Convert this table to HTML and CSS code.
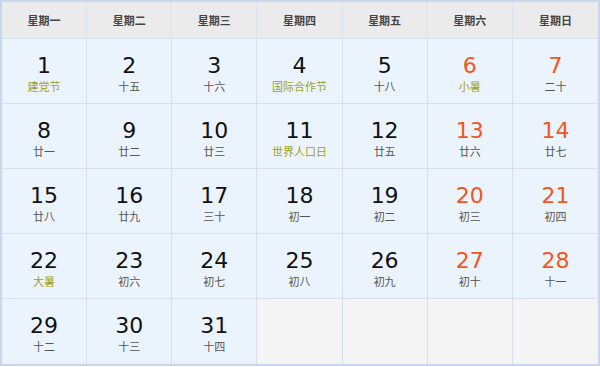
FILE: index.html
```html
<!DOCTYPE html>
<html lang="zh-CN">
<head>
<meta charset="utf-8">
<title>日历</title>
<link rel="stylesheet" href="styles.css">
</head>
<body>
<div class="cal">
  <div class="hd">星期一</div>
  <div class="hd">星期二</div>
  <div class="hd">星期三</div>
  <div class="hd">星期四</div>
  <div class="hd">星期五</div>
  <div class="hd">星期六</div>
  <div class="hd">星期日</div>

  <div class="day"><span class="n">1</span><span class="l fest">建党节</span></div>
  <div class="day"><span class="n">2</span><span class="l">十五</span></div>
  <div class="day"><span class="n">3</span><span class="l">十六</span></div>
  <div class="day"><span class="n">4</span><span class="l fest">国际合作节</span></div>
  <div class="day"><span class="n">5</span><span class="l">十八</span></div>
  <div class="day"><span class="n we">6</span><span class="l fest">小暑</span></div>
  <div class="day"><span class="n we">7</span><span class="l">二十</span></div>

  <div class="day"><span class="n">8</span><span class="l">廿一</span></div>
  <div class="day"><span class="n">9</span><span class="l">廿二</span></div>
  <div class="day"><span class="n">10</span><span class="l">廿三</span></div>
  <div class="day"><span class="n">11</span><span class="l fest">世界人口日</span></div>
  <div class="day"><span class="n">12</span><span class="l">廿五</span></div>
  <div class="day"><span class="n we">13</span><span class="l">廿六</span></div>
  <div class="day"><span class="n we">14</span><span class="l">廿七</span></div>

  <div class="day"><span class="n">15</span><span class="l">廿八</span></div>
  <div class="day"><span class="n">16</span><span class="l">廿九</span></div>
  <div class="day"><span class="n">17</span><span class="l">三十</span></div>
  <div class="day"><span class="n">18</span><span class="l">初一</span></div>
  <div class="day"><span class="n">19</span><span class="l">初二</span></div>
  <div class="day"><span class="n we">20</span><span class="l">初三</span></div>
  <div class="day"><span class="n we">21</span><span class="l">初四</span></div>

  <div class="day"><span class="n">22</span><span class="l fest">大暑</span></div>
  <div class="day"><span class="n">23</span><span class="l">初六</span></div>
  <div class="day"><span class="n">24</span><span class="l">初七</span></div>
  <div class="day"><span class="n">25</span><span class="l">初八</span></div>
  <div class="day"><span class="n">26</span><span class="l">初九</span></div>
  <div class="day"><span class="n we">27</span><span class="l">初十</span></div>
  <div class="day"><span class="n we">28</span><span class="l">十一</span></div>

  <div class="day"><span class="n">29</span><span class="l">十二</span></div>
  <div class="day"><span class="n">30</span><span class="l">十三</span></div>
  <div class="day"><span class="n">31</span><span class="l">十四</span></div>
  <div class="day empty"></div>
  <div class="day empty"></div>
  <div class="day empty"></div>
  <div class="day empty"></div>
</div>
</body>
</html>
```
FILE: styles.css
```css
html, body {
  margin: 0;
  padding: 0;
  background: #ffffff;
}
.cal {
  width: 600px;
  box-sizing: border-box;
  border: 2px solid #c6d8f0;
  display: grid;
  grid-template-columns: repeat(7, 1fr);
  grid-template-rows: 37px repeat(5, 65px);
  font-family: "DejaVu Sans", "Noto Sans CJK SC", sans-serif;
}
.hd {
  background: #ebebeb;
  border-right: 1px solid #d9e3f0;
  border-bottom: 1px solid #d6e2f2;
  display: flex;
  align-items: center;
  justify-content: center;
  font-family: "Noto Sans CJK SC", sans-serif;
  font-size: 11px;
  font-weight: bold;
  color: #444;
}
.hd:nth-child(7n) { border-right: none; }
.day {
  background: #ebf4fc;
  border-right: 1px solid #d4e0f0;
  border-bottom: 1px solid #d4e0f0;
  display: flex;
  flex-direction: column;
  align-items: center;
  padding-top: 14px;
  box-sizing: border-box;
}
.day:nth-child(7n) { border-right: none; }
.day:nth-last-child(-n+7) { border-bottom: none; }
.day.empty { background: #f4f4f4; }
.n {
  font-size: 22px;
  line-height: 26px;
  color: #111;
}
.n.we { color: #f2561d; }
.l {
  font-family: "Noto Sans CJK SC", sans-serif;
  font-size: 11px;
  line-height: 15px;
  color: #555;
}
.l.fest { color: #9ea21c; }
```
